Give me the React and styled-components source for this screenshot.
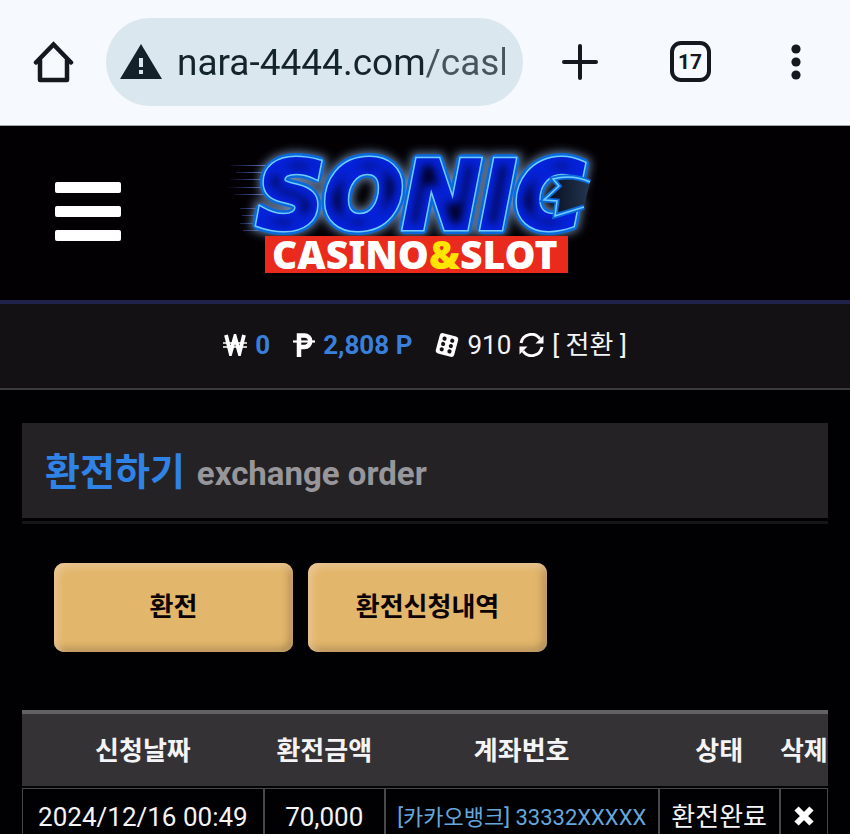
import React from "react";
import styled, { createGlobalStyle } from "styled-components";

const GlobalStyle = createGlobalStyle`
  *, *::before, *::after { box-sizing: border-box; }
  html { scrollbar-width: none; background: #010003; }
  body {
    margin: 0;
    background: #010003;
    color: #f4f4f6;
    font-family: Roboto, "Noto Sans CJK KR", sans-serif;
    font-size: 26px;
  }
  button { font: inherit; color: inherit; border: 0; padding: 0; background: none; cursor: pointer; }
`;

const BrowserBar = styled.header`
  display: flex;
  align-items: center;
  height: 126px;
  padding: 0 36px 2px 32px;
  background: #f6f9fe;
  border-bottom: 1px solid #a3a5a9;
  color: #15191f;
`;

const BarButton = styled.button`
  display: grid;
  place-items: center;
  flex: none;
  width: ${(p) => (p.$narrow ? 36 : 44)}px;
  height: 44px;
`;

const AddressBox = styled.label`
  display: flex;
  align-items: center;
  gap: 15px;
  flex: 1;
  min-width: 0;
  height: 88px;
  margin: 0 35px 0 30px;
  padding: 0 18px 0 14px;
  border-radius: 44px;
  background: #dbe7ee;
`;

const AddressInput = styled.input`
  flex: 1;
  min-width: 0;
  height: 48px;
  padding: 2px 0 0;
  border: 0;
  outline: 0;
  font-family: Roboto, sans-serif;
  font-size: 37px;
  color: transparent;
  background: linear-gradient(to right, #14242c 248px, #46555d 248px);
  background-clip: text;
`;

const BarActions = styled.div`
  display: flex;
  gap: 66px;
`;

const TabCount = styled.span`
  display: grid;
  place-items: center;
  width: 41px;
  height: 41px;
  border: 4px solid currentColor;
  border-radius: 11px;
  font-size: 21px;
  font-weight: 700;
  line-height: 20px;
`;

const SiteHeader = styled.div`
  display: grid;
  grid-template-columns: 1fr auto 1fr;
  align-items: center;
  height: 178px;
  padding: 0 54px 4px;
  background: #020003;
  border-bottom: 4px solid #20224c;
`;

const MenuButton = styled.button`
  display: grid;
  gap: 13px;
  width: 68px;
  padding: 0 1px;
`;

const MenuLine = styled.span`
  height: 11px;
  border-radius: 2px;
  background: #fff;
`;

const Balance = styled.div`
  display: flex;
  justify-content: center;
  align-items: center;
  height: 86px;
  padding-bottom: 2px;
  background: #131114;
  border-bottom: 2px solid #3b3a3d;
  line-height: 36px;
`;

const BalanceItem = styled.span`
  display: flex;
  align-items: center;
  gap: 8px;
  margin-right: ${(p) => (p.$last ? 0 : 23)}px;
`;

const Amount = styled.b`
  color: #3880dc;
  font-weight: 700;
`;

const Convert = styled.button`
  display: flex;
  align-items: center;
  gap: 8px;
  white-space: nowrap;
`;

const Main = styled.main`
  padding: 33px 22px 0;
`;

const TitleBar = styled.div`
  height: 101px;
  border-bottom: 3px solid #151417;
`;

const Title = styled.h1`
  display: flex;
  align-items: baseline;
  gap: 12px;
  height: 95px;
  margin: 0;
  padding: 21px 23px 0;
  background: #242225;
  font-size: 38px;
  line-height: 56px;
  color: #3083e6;
`;

const Subtitle = styled.small`
  font-size: 33px;
  color: #97969a;
`;

const Actions = styled.div`
  display: flex;
  gap: 15px;
  padding: 39px 32px 58px;
`;

const GoldButton = styled.button`
  width: 239px;
  height: 89px;
  && { padding-bottom: 6px; font-weight: 700; color: #0b0204; background: #e2b66b; }
  border-radius: 10px;
  box-shadow: inset 3px 3px 8px #eecb9c, inset -3px -3px 8px #a5834f;
`;

const Table = styled.table`
  width: 100%;
  table-layout: fixed;
  border-collapse: separate;
  border-spacing: 0;
  white-space: nowrap;
  text-align: center;
`;

const Head = styled.th`
  width: ${(p) => p.$width};
  height: 78px;
  padding: 1px 0 0;
  background: #343235;
  border-top: 4px solid #626164;
  border-bottom: 2px solid #050406;
  line-height: 38px;
`;

const Cell = styled.td`
  height: 57px;
  padding: 0;
  border: 1px solid #48474a;
  line-height: 38px;
`;

const Account = styled.span`
  font-size: 22px;
  color: #66a7dc;
`;

const HomeIcon = () => (
  <svg width="42" height="42" viewBox="0 0 42 42" fill="none" stroke="currentColor" strokeWidth="4.5" strokeLinecap="round" strokeLinejoin="round">
    <path d="M3 21.500 20.500 3.500 38 21.500" strokeLinejoin="miter" />
    <path d="M7 19V39h27V19" />
  </svg>
);

const WarningIcon = () => (
  <svg width="42" height="36" viewBox="0 0 42 36">
    <path d="M21 0 42 35H0z" fill="#14202a" />
    <path d="M19 14h4v9h-4zM19 26h4v4h-4z" fill="#dbe7ee" />
  </svg>
);

const PlusIcon = () => (
  <svg width="36" height="36" viewBox="0 0 36 36" stroke="currentColor" strokeWidth="4" strokeLinecap="round">
    <path d="M18 2v32M2 18h32" />
  </svg>
);

const DotsIcon = () => (
  <svg width="10" height="36" viewBox="0 0 10 36" fill="currentColor">
    <circle cx="5" cy="5" r="4.600" />
    <circle cx="5" cy="18" r="4.600" />
    <circle cx="5" cy="31" r="4.600" />
  </svg>
);

const WonIcon = () => (
  <svg width="24" height="22" viewBox="0 0 24 22" fill="none" stroke="#fff">
    <path d="M3 1 7.500 19 12 3 16.500 19 21 1" strokeWidth="3.800" />
    <path d="M0 9h24M0 13h24" strokeWidth="1.600" />
  </svg>
);

const PesoIcon = () => (
  <svg width="22" height="24" viewBox="0 0 22 24" fill="none" stroke="#fff">
    <path d="M6 24V2.500H11.500a5.300 5.300 0 0 1 0 11.500H6" strokeWidth="4.500" />
    <path d="M0 8.500h22" strokeWidth="2.200" />
  </svg>
);

const DiceIcon = () => (
  <svg width="24" height="24" viewBox="0 0 24 24">
    <g transform="rotate(15 12 12)">
      <rect x="2.500" y="1.500" width="19" height="21" rx="3" fill="#fff" />
      <g fill="#131114">
        <circle cx="8" cy="6.500" r="2.100" /><circle cx="16" cy="6.500" r="2.100" />
        <circle cx="8" cy="12" r="2.100" /><circle cx="16" cy="12" r="2.100" />
        <circle cx="8" cy="17.500" r="2.100" /><circle cx="16" cy="17.500" r="2.100" />
      </g>
    </g>
  </svg>
);

const RefreshIcon = () => (
  <svg width="25" height="24" viewBox="0 0 25 24" fill="none" stroke="#fff" strokeWidth="3">
    <path d="M2 10A10.500 10.500 0 0 1 21 6M23 14A10.500 10.500 0 0 1 4 18" />
    <path d="M24.500 2.500v8h-8zM.5 21.500v-8h8z" fill="#fff" stroke="none" />
  </svg>
);

const DeleteIcon = () => (
  <svg width="20" height="20" viewBox="0 0 20 20" stroke="#fff" strokeWidth="6">
    <path d="M2.500 2.500 17.500 17.500M17.500 2.500 2.500 17.500" />
  </svg>
);

const Wordmark = styled.text`
  font-family: "DejaVu Sans", sans-serif;
  font-size: 93px;
  font-weight: 700;
  font-style: italic;
`;

const Tagline = styled.text`
  font-family: "Noto Sans", sans-serif;
  font-size: 39px;
  font-weight: 900;
  fill: #fff;
`;

const LogoSvg = styled.svg`
  display: block;
  overflow: visible;
`;

const Logo = () => (
  <LogoSvg width="400" height="150" viewBox="225 136 400 150" role="img" aria-label="SONIC CASINO&SLOT">
    <defs>
      <Wordmark id="wordmark" x="257" y="228">SONIC</Wordmark>
      <path id="spikes" d="M590 182C579 177 568 175 553 179L559 186 544 200 557 201 555 216 584 207" />
      <filter id="halo" x="-20%" y="-40%" width="140%" height="180%"><feGaussianBlur stdDeviation="5" /></filter>
      <filter id="core" x="-5%" y="-10%" width="110%" height="120%">
        <feMorphology operator="erode" radius="7" />
        <feGaussianBlur stdDeviation="4" />
      </filter>
      <linearGradient id="streak">
        <stop offset="0" stopColor="#465be0" stopOpacity="0" />
        <stop offset="1" stopColor="#6d88e8" />
      </linearGradient>
      <linearGradient id="opening">
        <stop offset="0" stopColor="#040a1c" />
        <stop offset="1" stopColor="#24364f" />
      </linearGradient>
      <mask id="cut" maskUnits="userSpaceOnUse" x="225" y="130" width="400" height="160">
        <rect x="225" y="130" width="400" height="160" fill="#fff" />
        <use href="#spikes" fill="#000" />
        <path d="M588 182h30v26h-36z" fill="#000" />
      </mask>
    </defs>
    <path d="M230 165h40v1h-40zM236 172h34v1h-34zM230 179h40v1h-40zM226 187h44v1h-44zM234 194h36v1h-36zM240 208h25v1h-25zM242 215h20v1h-20zM240 223h20v1h-20zM243 230h20v1h-20z" fill="url(#streak)" />
    <use href="#wordmark" fill="#6d86a8" stroke="#6d86a8" strokeWidth="14" filter="url(#halo)" />
    <g mask="url(#cut)">
      <use href="#wordmark" fill="#0969dd" stroke="#0969dd" strokeWidth="12" strokeLinejoin="round" />
      <use href="#wordmark" fill="#70cfff" stroke="#70cfff" strokeWidth="7" />
      <use href="#wordmark" fill="#0522dd" stroke="#0522dd" strokeWidth="4" />
      <use href="#wordmark" fill="#01022a" stroke="#01022a" strokeWidth="5" filter="url(#core)" />
    </g>
    <use href="#spikes" fill="url(#opening)" />
    <use href="#spikes" fill="none" stroke="#0969dd" strokeWidth="5" />
    <use href="#spikes" fill="none" stroke="#70cfff" strokeWidth="1.500" />
    <rect x="265" y="236" width="303" height="37" fill="#e92a1c" />
    <Tagline x="272" y="269">CASINO<tspan fill="#ffe500">&amp;</tspan>SLOT</Tagline>
  </LogoSvg>
);

const columns = [
  ["신청날짜", "30%"],
  ["환전금액", "15%"],
  ["계좌번호", "34%"],
  ["상태", "15%"],
  ["삭제", "6%"],
];

export default function App() {
  return (
    <>
      <GlobalStyle />
      <BrowserBar>
        <BarButton aria-label="Home"><HomeIcon /></BarButton>
        <AddressBox>
          <WarningIcon />
          <AddressInput type="text" aria-label="Address" defaultValue="nara-4444.com/cash" />
        </AddressBox>
        <BarActions>
          <BarButton aria-label="New tab"><PlusIcon /></BarButton>
          <BarButton aria-label="Tabs"><TabCount>17</TabCount></BarButton>
          <BarButton $narrow aria-label="More"><DotsIcon /></BarButton>
        </BarActions>
      </BrowserBar>
      <SiteHeader>
        <MenuButton aria-label="Menu"><MenuLine /><MenuLine /><MenuLine /></MenuButton>
        <Logo />
      </SiteHeader>
      <Balance>
        <BalanceItem><WonIcon /><Amount>0</Amount></BalanceItem>
        <BalanceItem><PesoIcon /><Amount>2,808 P</Amount></BalanceItem>
        <BalanceItem $last>
          <DiceIcon />910
          <Convert><RefreshIcon />[ 전환 ]</Convert>
        </BalanceItem>
      </Balance>
      <Main>
        <TitleBar>
          <Title>환전하기<Subtitle>exchange order</Subtitle></Title>
        </TitleBar>
        <Actions>
          <GoldButton>환전</GoldButton>
          <GoldButton>환전신청내역</GoldButton>
        </Actions>
        <Table>
          <thead>
            <tr>{columns.map(([name, width]) => <Head key={name} $width={width} scope="col">{name}</Head>)}</tr>
          </thead>
          <tbody>
            <tr>
              <Cell>2024/12/16 00:49</Cell>
              <Cell>70,000</Cell>
              <Cell><Account>[카카오뱅크] 33332XXXXX</Account></Cell>
              <Cell>환전완료</Cell>
              <Cell><button aria-label="삭제"><DeleteIcon /></button></Cell>
            </tr>
          </tbody>
        </Table>
      </Main>
    </>
  );
}
